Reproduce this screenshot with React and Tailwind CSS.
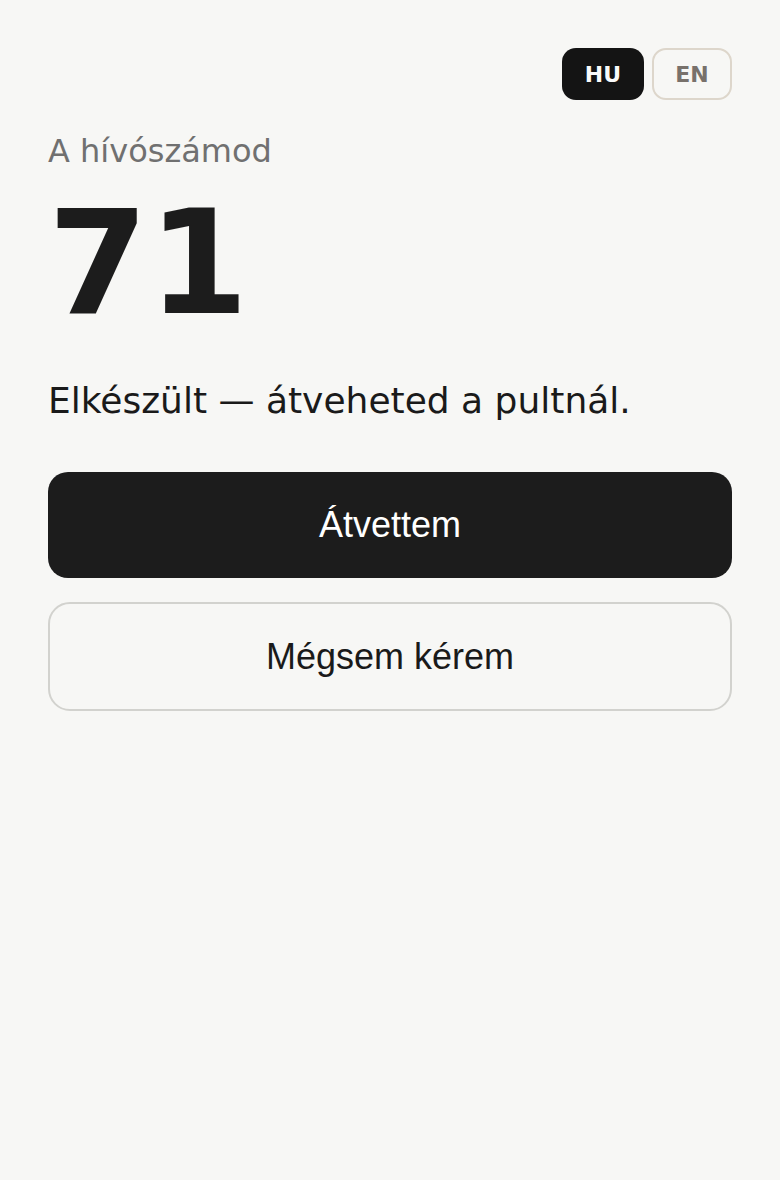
import React from "react";

export default function App() {
  return (
    <div className="min-h-[1180px] w-full bg-[#f7f7f5] px-12 pt-12">
      <div className="flex justify-end gap-2 font-['DejaVu_Sans',sans-serif]">
        <button className="flex h-[52px] w-[82px] items-center justify-center rounded-[14px] bg-[#141414] text-[22px] font-bold text-[#fafafa]">
          HU
        </button>
        <button className="flex h-[52px] w-[80px] items-center justify-center rounded-[14px] border-2 border-[#ddd6cb] text-[22px] font-bold text-[#78716b]">
          EN
        </button>
      </div>
      <div className="font-['DejaVu_Sans',sans-serif]">
        <div className="mt-[31px] text-[32px] leading-[40px] text-[#707070]">A hívószámod</div>
        <div className="mt-[20px] text-[144px] font-bold leading-none text-[#1c1c1c]">71</div>
        <div className="mt-[46px] text-[36px] leading-[40px] text-[#1a1a1a]">
          Elkészült — átveheted a pultnál.
        </div>
      </div>
      <div className="mt-[51px] flex flex-col gap-6 font-['Liberation_Sans',Arial,sans-serif]">
        <button className="flex h-[106px] w-full items-center justify-center rounded-[20px] bg-[#1c1c1c] text-[36px] text-white">
          Átvettem
        </button>
        <button className="flex h-[109px] w-full items-center justify-center rounded-[22px] border-2 border-[#d2d2ce] text-[36px] text-[#1a1a1a]">
          Mégsem kérem
        </button>
      </div>
    </div>
  );
}
